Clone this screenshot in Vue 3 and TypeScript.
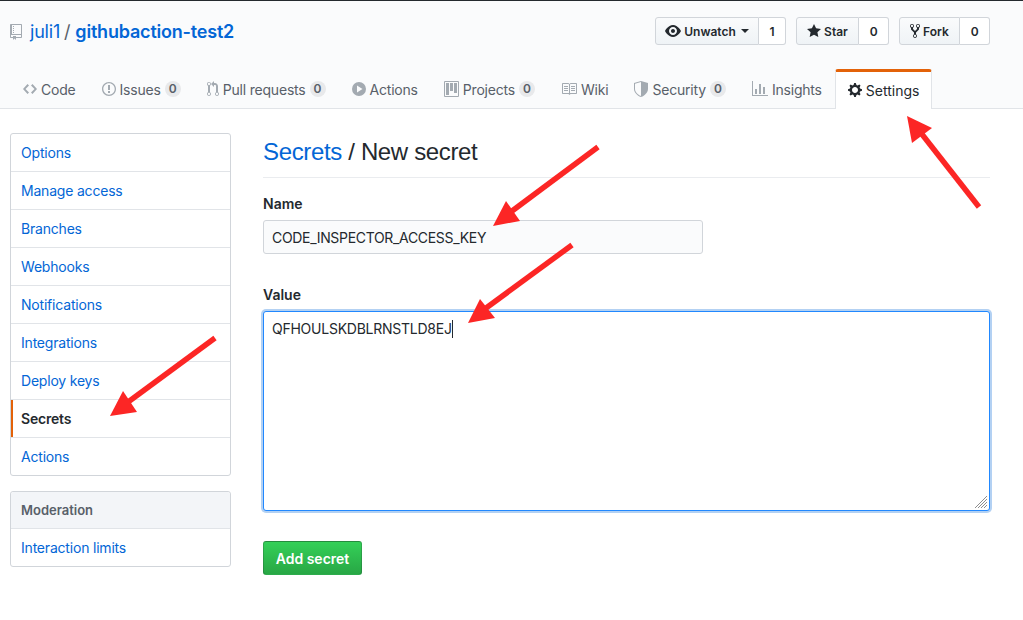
<script setup lang="ts">
interface Tab { label: string; count?: number; icon: string; active?: boolean }
const tabs: Tab[] = [
  { label: 'Code', icon: 'code' },
  { label: 'Issues', count: 0, icon: 'issue' },
  { label: 'Pull requests', count: 0, icon: 'pr' },
  { label: 'Actions', icon: 'play' },
  { label: 'Projects', count: 0, icon: 'proj' },
  { label: 'Wiki', icon: 'book' },
  { label: 'Security', count: 0, icon: 'shield' },
  { label: 'Insights', icon: 'graph' },
  { label: 'Settings', icon: 'gear', active: true },
]
const menu = ['Options', 'Manage access', 'Branches', 'Webhooks', 'Notifications', 'Integrations', 'Deploy keys', 'Secrets', 'Actions']
const arrows = [
  { line: '598,147 508,214', head: '493,226 506,201 520,221' },
  { line: '572,245 482,311', head: '468,323 480,299 495,318' },
  { line: '215,338 124,405', head: '110,416 123,391 137,412' },
  { line: '979,207 921,133', head: '907,116 932,128 912,143' },
]
</script>

<template>
  <div class="page">
    <header class="head">
      <div class="top">
        <div class="title">
          <svg class="repo" width="12" height="16" viewBox="0 0 12 16"><path fill="#a3aab1" fill-rule="evenodd" d="M4 9H3V8h1v1zm0-3H3v1h1V6zm0-2H3v1h1V4zm0-2H3v1h1V2zm8-1v12c0 .55-.45 1-1 1H6v2l-1.500-1.500L3 16v-2H1c-.55 0-1-.45-1-1V1c0-.55.45-1 1-1h10c.55 0 1 .45 1 1zm-1 10H1v2h2v-1h3v1h5v-2zm0-10H2v9h9V1z"/></svg>
          <a class="owner">juli1</a><span class="sep">/</span><a class="name">githubaction-test2</a>
        </div>
        <div class="actions">
          <div class="btn-group">
            <span class="btn b1">
              <svg width="16" height="16" viewBox="0 0 16 16"><path fill="#24292e" fill-rule="evenodd" d="M8.060 2C3 2 0 8 0 8s3 6 8.060 6C13 14 16 8 16 8s-3-6-7.940-6zM8 12c-2.200 0-4-1.780-4-4 0-2.200 1.800-4 4-4 2.220 0 4 1.800 4 4 0 2.220-1.780 4-4 4zm2-4c0 1.110-.890 2-2 2-1.110 0-2-.890-2-2 0-1.110.890-2 2-2 1.110 0 2 .890 2 2z"/></svg>
              Unwatch<i class="caret"></i>
            </span><span class="num w1">1</span>
          </div>
          <div class="btn-group">
            <span class="btn b2">
              <svg width="14" height="16" viewBox="0 0 14 16"><path fill="#24292e" fill-rule="evenodd" d="M14 6l-4.900-.640L7 1 4.900 5.360 0 6l3.600 3.260L2.670 14 7 11.670 11.330 14l-.930-4.740L14 6z"/></svg>
              Star
            </span><span class="num w2">0</span>
          </div>
          <div class="btn-group">
            <span class="btn b3">
              <svg width="10" height="16" viewBox="0 0 10 16"><path fill="#24292e" fill-rule="evenodd" d="M8 1a1.993 1.993 0 0 0-1 3.720V6L5 8 3 6V4.720A1.993 1.993 0 0 0 2 1a1.993 1.993 0 0 0-1 3.720V6.500l3 3v1.780A1.993 1.993 0 0 0 5 15a1.993 1.993 0 0 0 1-3.720V9.500l3-3V4.720A1.993 1.993 0 0 0 8 1zM2 4.200C1.340 4.200.8 3.650.8 3c0-.650.550-1.200 1.200-1.200.650 0 1.200.550 1.200 1.200 0 .650-.550 1.200-1.200 1.200zm3 10c-.660 0-1.200-.550-1.200-1.200 0-.650.550-1.200 1.200-1.200.650 0 1.200.550 1.200 1.200 0 .650-.550 1.200-1.200 1.200zm3-10c-.660 0-1.200-.550-1.200-1.200 0-.650.550-1.200 1.200-1.200.650 0 1.200.550 1.200 1.200 0 .650-.550 1.200-1.200 1.200z"/></svg>
              Fork
            </span><span class="num w3">0</span>
          </div>
        </div>
      </div>
      <nav class="tabs">
        <a v-for="t in tabs" :key="t.label" class="tab" :class="{ active: t.active }">
          <svg v-if="t.icon === 'code'" width="14" height="16" viewBox="0 0 14 16"><path fill="#a3aab1" fill-rule="evenodd" d="M9.500 3L8 4.500 11.500 8 8 11.500 9.500 13 14 8 9.500 3zm-5 0L0 8l4.500 5L6 11.500 2.500 8 6 4.500 4.500 3z"/></svg>
          <svg v-else-if="t.icon === 'issue'" width="14" height="16" viewBox="0 0 14 16"><path fill="#a3aab1" fill-rule="evenodd" d="M7 2.300c3.140 0 5.700 2.560 5.700 5.700s-2.560 5.700-5.700 5.700A5.710 5.710 0 0 1 1.300 8c0-3.140 2.560-5.700 5.700-5.700zM7 1C3.140 1 0 4.140 0 8s3.140 7 7 7 7-3.140 7-7-3.140-7-7-7zm1 3H6v5h2V4zm0 6H6v2h2v-2z"/></svg>
          <svg v-else-if="t.icon === 'pr'" width="12" height="16" viewBox="0 0 12 16"><path fill="#a3aab1" fill-rule="evenodd" d="M11 11.280V5c-.030-.780-.340-1.470-.940-2.060C9.460 2.350 8.780 2.030 8 2H7V0L4 3l3 3V4h1c.270.020.480.110.690.310.210.200.300.420.310.690v6.280A1.993 1.993 0 0 0 10 15a1.993 1.993 0 0 0 1-3.720zm-1 2.920c-.660 0-1.200-.550-1.200-1.200 0-.650.550-1.200 1.200-1.200.650 0 1.200.550 1.200 1.200 0 .650-.550 1.200-1.200 1.200zM4 3c0-1.110-.890-2-2-2a1.993 1.993 0 0 0-1 3.720v6.560A1.993 1.993 0 0 0 2 15a1.993 1.993 0 0 0 1-3.720V4.720c.590-.340 1-.980 1-1.720zm-.800 10c0 .660-.550 1.200-1.200 1.200-.650 0-1.200-.550-1.200-1.200 0-.650.550-1.200 1.200-1.200.650 0 1.200.550 1.200 1.200zM2 4.200C1.340 4.200.8 3.650.8 3c0-.650.550-1.200 1.200-1.200.650 0 1.200.550 1.200 1.200 0 .650-.550 1.200-1.200 1.200z"/></svg>
          <svg v-else-if="t.icon === 'play'" width="14" height="16" viewBox="0 0 14 16"><path fill="#a3aab1" fill-rule="evenodd" d="M7 1a7 7 0 1 0 0 14A7 7 0 0 0 7 1zM5 11.500v-7L10.500 8 5 11.500z"/></svg>
          <svg v-else-if="t.icon === 'proj'" width="15" height="16" viewBox="0 0 15 16"><path fill="#a3aab1" fill-rule="evenodd" d="M10 12h3V2h-3v10zm-4-2h3V2H6v8zm-4 4h3V2H2v12zm-1 1h13V1H1v14zM14 0H1a1 1 0 0 0-1 1v14a1 1 0 0 0 1 1h13a1 1 0 0 0 1-1V1a1 1 0 0 0-1-1z"/></svg>
          <svg v-else-if="t.icon === 'book'" width="16" height="16" viewBox="0 0 16 16"><path fill="#a3aab1" fill-rule="evenodd" d="M3 5h4v1H3V5zm0 3h4V7H3v1zm0 2h4V9H3v1zm11-5h-4v1h4V5zm0 2h-4v1h4V7zm0 2h-4v1h4V9zm2-6v9c0 .550-.450 1-1 1H9.500l-1 1-1-1H2c-.550 0-1-.450-1-1V3c0-.550.450-1 1-1h5.500l1 1 1-1H15c.550 0 1 .450 1 1zm-8 .500L7.500 3H2v9h6V3.500zm7-.500H9.500l-.500.500V12h6V3z"/></svg>
          <svg v-else-if="t.icon === 'shield'" width="14" height="16" viewBox="0 0 14 16"><path fill="#a3aab1" fill-rule="evenodd" d="M0 2l7-2 7 2v6.020C14 12.690 8.120 16 7 16c-1.120 0-7-3.310-7-7.980V2zm1 .750L7 1v14c-.900 0-6-2.910-6-6.980V2.750z"/></svg>
          <svg v-else-if="t.icon === 'graph'" width="16" height="16" viewBox="0 0 16 16"><path fill="#a3aab1" fill-rule="evenodd" d="M16 14v1H0V0h1v14h15zM5 13H3V8h2v5zm4 0H7V3h2v10zm4 0h-2V6h2v7z"/></svg>
          <svg v-else width="14" height="16" viewBox="0 0 14 16"><path fill="#24292e" fill-rule="evenodd" d="M14 8.770v-1.600l-1.940-.640-.450-1.090.880-1.840-1.130-1.130-1.810.910-1.090-.450-.690-1.920h-1.600l-.630 1.940-1.110.450-1.840-.880-1.130 1.130.910 1.810-.450 1.090L0 7.230v1.590l1.940.640.450 1.090-.880 1.840 1.130 1.130 1.810-.910 1.090.450.690 1.920h1.590l.630-1.940 1.110-.450 1.840.880 1.130-1.130-.920-1.810.470-1.090L14 8.750v.020zM7 11c-1.660 0-3-1.340-3-3s1.340-3 3-3 3 1.340 3 3-1.340 3-3 3z"/></svg>
          <span>{{ t.label }}</span>
          <span v-if="t.count !== undefined" class="counter">{{ t.count }}</span>
        </a>
      </nav>
    </header>

    <div class="body">
      <aside class="side">
        <div class="menu">
          <a v-for="m in menu" :key="m" class="item" :class="{ sel: m === 'Secrets' }">{{ m }}</a>
        </div>
        <div class="menu">
          <div class="item heading">Moderation</div>
          <a class="item">Interaction limits</a>
        </div>
      </aside>
      <main class="main">
        <h2 class="sub"><a>Secrets</a> / New secret</h2>
        <form class="form" @submit.prevent>
          <label class="lbl">Name</label>
          <div class="field name-field">CODE_INSPECTOR_ACCESS_KEY</div>
          <label class="lbl val">Value</label>
          <div class="area">
            <span>QFHOULSKDBLRNSTLD8EJ</span><i class="cursor"></i>
            <svg class="grip" width="14" height="14" viewBox="0 0 14 14"><path stroke="#8e8e8e" stroke-width="1" fill="none" d="M1 13L13 1M4 13L13 4M7 13l6-6M10 13l3-3" /></svg>
          </div>
          <button class="add" type="button">Add secret</button>
        </form>
      </main>
    </div>

    <svg class="overlay" width="1023" height="620" viewBox="0 0 1023 620">
      <g v-for="(a, i) in arrows" :key="i">
        <polyline :points="a.line" fill="none" stroke="#fc2625" stroke-width="5.5" />
        <polygon :points="a.head" fill="#fc2625" />
      </g>
    </svg>
  </div>
</template>

<style>
html, body { margin: 0; background: #fff; }
</style>

<style scoped>
.page {
  position: relative;
  width: 1023px;
  height: 620px;
  overflow: hidden;
  background: #fff;
  font-family: Inter, "Liberation Sans", Arial, sans-serif;
  font-size: 14px;
  letter-spacing: -0.2px;
  color: #24292e;
}
a { color: #0366d6; text-decoration: none; }
.head {
  height: 107px;
  background: #fafbfc;
  border-top: 1px solid #24292e;
  border-bottom: 1px solid #e1e4e8;
  box-sizing: content-box;
}
.top {
  display: flex;
  justify-content: space-between;
  align-items: flex-start;
  padding: 16px 33px 0 10px;
  height: 52px;
  box-sizing: border-box;
}
.title {
  display: flex;
  align-items: center;
  font-size: 18px;
  height: 29px;
  color: #586069;
}
.repo { margin-right: 8px; }
.sep { margin: 0 5px 0 4px; }
.name { font-weight: 600; }
.actions { display: flex; gap: 10px; }
.btn-group { display: flex; height: 28px; }
.btn {
  display: flex;
  align-items: center;
  justify-content: center;
  gap: 3px;
  font-size: 12px;
  font-weight: 600;
  letter-spacing: 0;
  box-sizing: border-box;
  border: 1px solid #d1d5da;
  border-radius: 3px 0 0 3px;
  background: linear-gradient(#fafbfc, #eff3f6);
}
.b1 { width: 104px; }
.b2 { width: 63px; }
.b3 { width: 61px; }
.caret {
  display: inline-block;
  margin-left: 2px;
  border: 4px solid transparent;
  border-top-color: #24292e;
  border-bottom: 0;
}
.num {
  display: flex;
  align-items: center;
  justify-content: center;
  font-size: 12px;
  font-weight: 600;
  box-sizing: border-box;
  background: #fff;
  border: 1px solid #d1d5da;
  border-left: 0;
  border-radius: 0 3px 3px 0;
}
.w1 { width: 27px; }
.w2, .w3 { width: 30px; }
.tabs {
  display: flex;
  height: 39px;
  margin-top: 16px;
  padding-left: 10px;
}
.tab {
  display: flex;
  align-items: center;
  gap: 4px;
  height: 40px;
  padding: 0 13px;
  color: #586069;
  box-sizing: border-box;
  white-space: nowrap;
}
.tab.active {
  color: #24292e;
  background: #fff;
  letter-spacing: 0;
  border: 1px solid #e1e4e8;
  border-top: 3px solid #e36209;
  border-bottom: 0;
  border-radius: 3px 3px 0 0;
  padding: 0 12px 1px;
  position: relative;
  z-index: 1;
}
.counter {
  display: inline-block;
  min-width: 8px;
  padding: 2px 4px;
  font-size: 12px;
  font-weight: 600;
  letter-spacing: 0;
  line-height: 1;
  text-align: center;
  color: #586069;
  background: rgba(27, 31, 35, 0.08);
  border-radius: 20px;
}
.body {
  display: flex;
  padding: 24px 33px 0 10px;
}
.side { width: 221px; flex: none; display: flex; flex-direction: column; gap: 15px; margin-right: 32px; }
.menu {
  border: 1px solid #d1d5da;
  border-radius: 3px;
  display: flex;
  flex-direction: column;
}
.item {
  display: block;
  height: 38px;
  line-height: 37px;
  padding: 0 10px;
  border-bottom: 1px solid #e1e4e8;
  box-sizing: border-box;
}
.item:last-child { border-bottom: 0; height: 37px; }
.item.sel {
  color: #24292e;
  font-weight: 600;
  box-shadow: inset 2px 0 0 #e36209;
}
.item.heading {
  height: 37px;
  line-height: 36px;
  background: #f3f5f8;
  color: #586069;
  font-size: 13px;
  font-weight: 600;
  letter-spacing: 0;
  border-radius: 3px 3px 0 0;
}
.main { flex: 1; min-width: 0; }
.sub {
  margin: 0;
  height: 44px;
  font-family: "Liberation Sans", Arial, sans-serif;
  font-size: 24px;
  font-weight: 400;
  letter-spacing: -0.35px;
  line-height: 38px;
  border-bottom: 1px solid #eaecef;
}
.form { display: flex; flex-direction: column; align-items: flex-start; }
.lbl { font-weight: 600; letter-spacing: 0; margin-top: 17px; line-height: 17px; }
.lbl.val { margin-top: 32px; }
.field {
  margin-top: 8px;
  width: 440px;
  height: 34px;
  line-height: 34px;
  padding: 0 8px;
  box-sizing: border-box;
  letter-spacing: -0.32px;
  background: #fafbfc;
  border: 1px solid #d1d5da;
  border-radius: 3px;
}
.area {
  position: relative;
  margin-top: 8px;
  width: 727px;
  height: 200px;
  box-sizing: border-box;
  padding: 7px 8px;
  line-height: 20px;
  letter-spacing: -0.25px;
  border: 1px solid #2188ff;
  border-radius: 3px;
  box-shadow: 0 0 0 2px rgba(3, 102, 214, 0.3);
  background: #fff;
}
.cursor {
  display: inline-block;
  width: 1px;
  height: 18px;
  background: #24292e;
  vertical-align: -4px;
}
.grip { position: absolute; right: 1px; bottom: 1px; }
.add {
  margin-top: 30px;
  width: 99px;
  height: 34px;
  font: 600 14px Inter, "Liberation Sans", Arial, sans-serif;
  color: #fff;
  border: 1px solid rgba(27, 31, 35, 0.2);
  border-radius: 3px;
  background: linear-gradient(#34d058, #28a745);
}
.overlay { position: absolute; left: 0; top: 0; pointer-events: none; }
</style>
